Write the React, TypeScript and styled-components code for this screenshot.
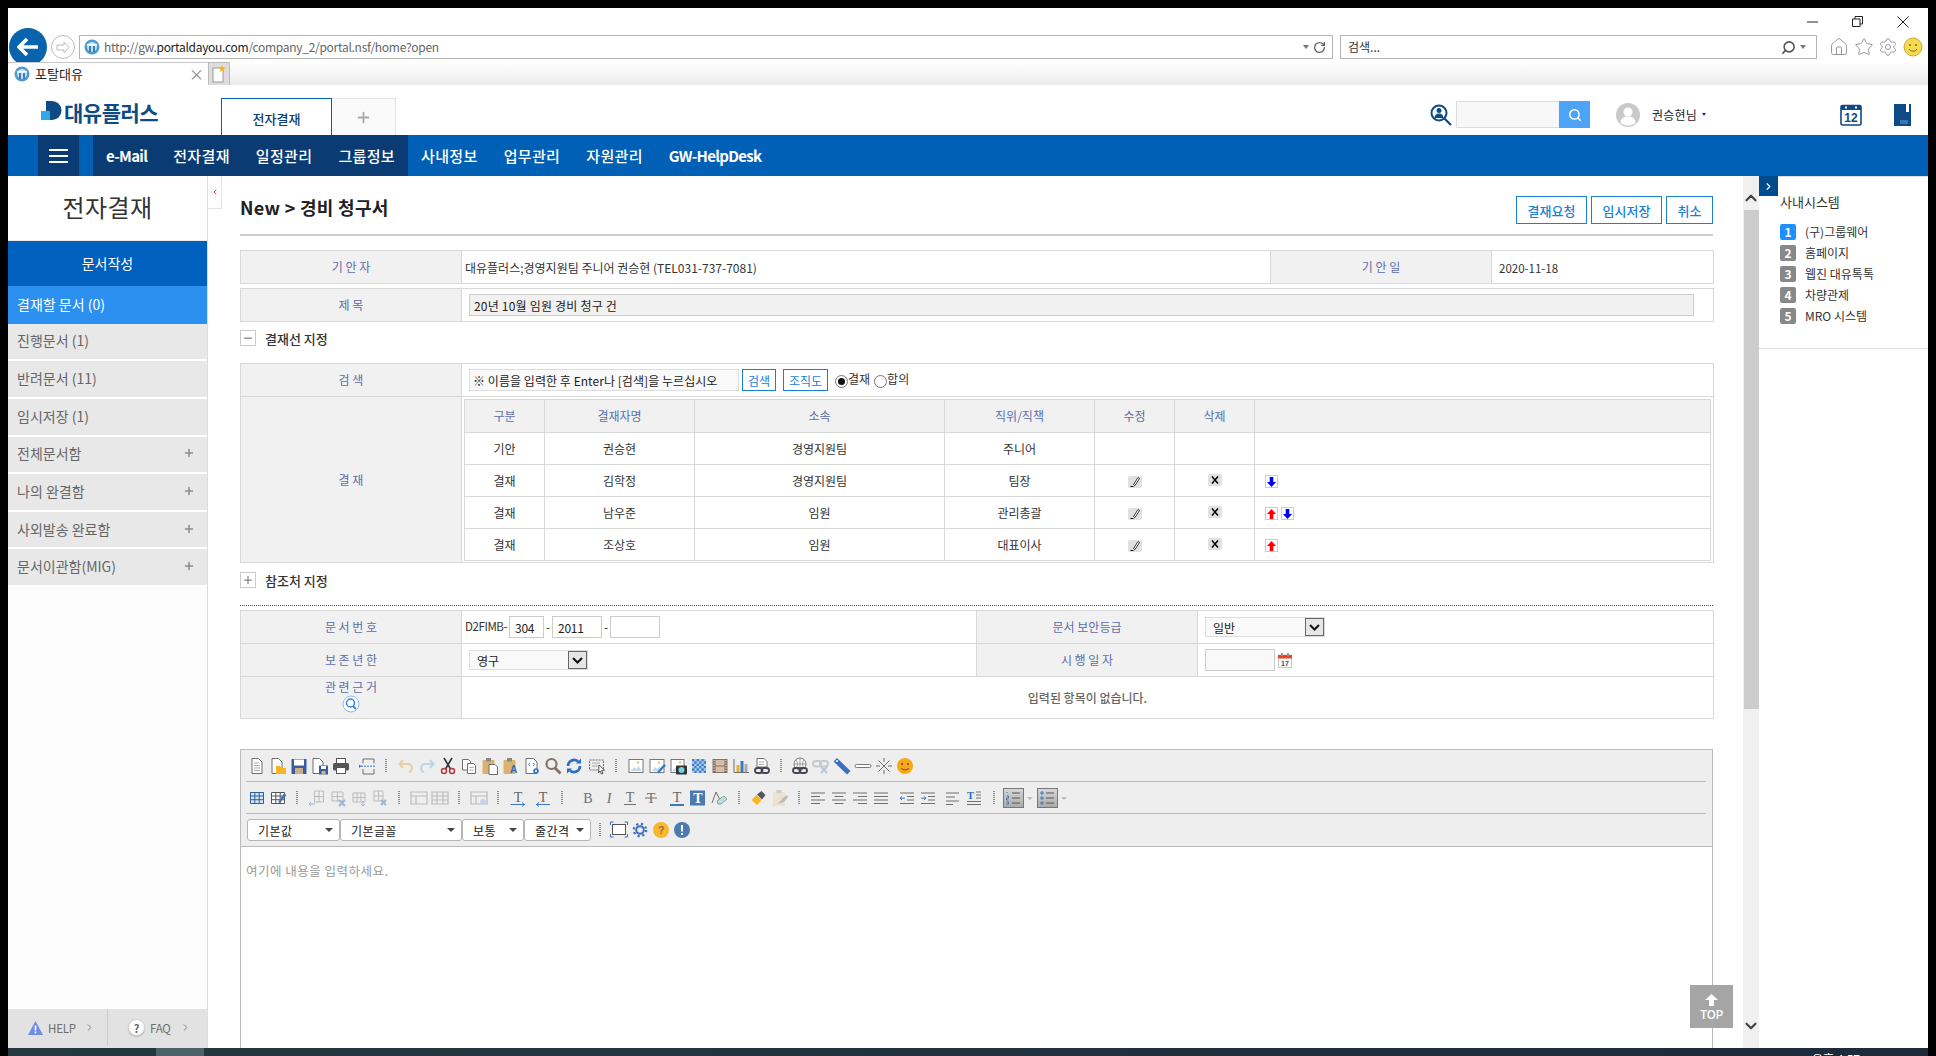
import React from 'react';
import styled, { createGlobalStyle } from 'styled-components';
import { Home, Star, Settings, RotateCw, Search, Plus, Minus, ChevronRight, ChevronLeft, ChevronUp, ChevronDown } from 'lucide-react';

const Global = createGlobalStyle`
  html, body { margin: 0; padding: 0; height: 100%; background: #000; overflow: hidden; }
  #root { height: 100%; }
  * { box-sizing: border-box; }
  body { font-family: "Noto Sans CJK KR", "Noto Sans", sans-serif; font-size: 12px; color: #333; }
  input { font-family: inherit; }
`;

const Page = styled.div`
  height: 1056px; padding: 8px 8px 0; display: flex; flex-direction: column; background: #000;
`;
const Win = styled.div`
  width: 1920px; height: 1040px; background: #fff; display: flex; flex-direction: column; overflow: hidden;
`;
const WinControls = styled.div`
  height: 27px; display: flex; align-items: center; justify-content: flex-end; padding-right: 19px; gap: 34px;
  svg { display: block; }
`;
const AddrRow = styled.div`
  height: 24px; display: flex; align-items: center; padding-left: 1px;
`;
const BackBtn = styled.div`
  width: 38px; height: 38px; border-radius: 50%; background: #0a64ad; display: flex; align-items: center; justify-content: center; flex: none;
`;
const FwdBtn = styled.div`
  width: 24px; height: 24px; margin-left: 4px; border: 1px solid #bbb; border-radius: 50%; display: flex; align-items: center; justify-content: center; flex: none;
`;
const UrlBox = styled.div<{ $w: number; $ml: number }>`
  width: ${p => p.$w}px; margin-left: ${p => p.$ml}px; height: 24px; border: 1px solid #b4b4b4; display: flex; align-items: center; padding: 0 6px 0 4px; flex: none; font-size: 12px; line-height: 22px; color: #666;
`;
const UrlText = styled.span`
  flex: 1; margin-left: 4px; letter-spacing: -0.28px; b { color: #222; font-weight: 400; }
`;
const SearchText = styled.span`
  flex: 1; margin-left: 3px; color: #333;
`;
const Tiny = styled.span`
  width: 0; height: 0; border-left: 3px solid transparent; border-right: 3px solid transparent; border-top: 4px solid #777; margin: 0 4px;
`;
const BrowserIcons = styled.div`
  display: flex; align-items: center; gap: 4.5px; margin-left: 12px; svg { display: block; }
`;
const Gap3 = styled.div` height: 3px; `;
const TabRow = styled.div`
  height: 23px; position: relative; display: flex; background: linear-gradient(#fff, #ececec); flex: none;
`;
const BTab = styled.div`
  width: 200px; height: 23px; background: #fff; border-top: 1px solid #c8c8c8; display: flex; align-items: center; padding: 0 4px 1px 6px; font-size: 13px; color: #222; gap: 5px;
`;
const BTabTitle = styled.span` flex: 1; `;
const BTabClose = styled.span` color: #888; font-size: 15px; line-height: 1; `;
const NewTab = styled.div`
  width: 22px; height: 23px; background: #ddd; border: 1px solid #bbb; border-bottom: 0; display: flex; align-items: center; justify-content: center;
`;

const Header = styled.div`
  height: 50px; display: flex; position: relative; flex: none; background: #fff;
`;
const Logo = styled.div`
  width: 213px; padding: 15px 0 0 33px; display: flex; align-items: flex-start; color: #0d4a86; font-weight: 700; font-size: 21px; line-height: 24px; letter-spacing: -0.5px; gap: 1px;
`;
const PortalTabs = styled.div`
  display: flex; align-items: flex-end; height: 50px;
`;
const PTab = styled.div`
  width: 111px; height: 37px; border: 1px solid #0060b6; border-bottom: 0; display: flex; align-items: center; justify-content: center; font-size: 13px; font-weight: 500; color: #0b3d74; padding-top: 3px;
`;
const PAdd = styled.div`
  width: 64px; height: 37px; border: 1px solid #e4e4e4; border-left: 0; border-bottom: 0; background: #fafafa; display: flex; align-items: center; justify-content: center; color: #aaa;
`;
const HeaderRight = styled.div`
  margin-left: auto; display: flex; align-items: center; height: 50px; padding-right: 17px; padding-top: 9px;
`;
const HSearchIco = styled.div` width: 22px; height: 22px; margin-right: 4px; `;
const HInput = styled.div` width: 103px; height: 27px; background: #f8f8f8; border: 1px solid #ddd; border-right: 0; `;
const HBtn = styled.div` width: 31px; height: 27px; background: #4da3f5; display: flex; align-items: center; justify-content: center; `;
const Avatar = styled.div` width: 24px; height: 24px; margin-left: 26px; `;
const UserName = styled.div` margin-left: 12px; font-size: 12px; color: #222; letter-spacing: .2px; display: flex; align-items: center; gap: 3px; `;
const Caret = styled.span` width: 0; height: 0; border-left: 2.5px solid transparent; border-right: 2.5px solid transparent; border-top: 3px solid #0b3d74; margin-left: 2px; `;
const HIco = styled.div<{ $ml: number }>` margin-left: ${p => p.$ml}px; height: 22px; svg { display: block; } `;

const Nav = styled.nav`
  height: 41px; background: #0060b6; display: flex; padding-left: 30px; flex: none;
`;
const Burger = styled.div`
  width: 41px; background: #0a3c73; display: flex; flex-direction: column; justify-content: center; align-items: center; gap: 4px;
  i { display: block; width: 19px; height: 2px; background: #fff; }
`;
const DarkGroup = styled.div`
  margin-left: 14px; background: #0a3c73; display: flex;
`;
const NavGroup = styled.div` display: flex; `;
const NavItem = styled.div<{ $latin?: boolean }>`
  padding: 0 13px; display: flex; align-items: center; color: #fff; font-size: 15px; font-weight: ${p => (p.$latin ? 700 : 500)}; letter-spacing: ${p => (p.$latin ? '-0.7px' : '0.35px')};
`;

const Body = styled.div`
  flex: 1; display: flex; min-height: 0;
`;
const Side = styled.aside`
  width: 200px; flex: none; border-right: 1px solid #ddd; background: #fcfcfc; display: flex; flex-direction: column;
`;
const SideTitle = styled.div`
  height: 65px; background: #fff; display: flex; align-items: center; justify-content: center; font-size: 24px; color: #333; letter-spacing: .4px; padding-bottom: 4px; border-bottom: 1px solid #e8e8e8;
`;
const SideWrite = styled.div`
  height: 45px; background: #0060c0; color: #fff; font-size: 14px; display: flex; align-items: center; justify-content: center; padding-bottom: 2px;
`;
const SideItem = styled.div<{ $active?: boolean }>`
  height: 37.65px; padding: 0 12px 2px 9px; display: flex; align-items: center; justify-content: space-between; font-size: 14px; color: ${p => (p.$active ? '#fff' : '#666')}; background: ${p => (p.$active ? '#2b90ef' : '#e8e8e8')}; border-bottom: ${p => (p.$active ? 0 : '2px solid #fff')};
  svg { display: block; }
`;
const SideFoot = styled.div`
  margin-top: auto; height: 39px; background: #e2e2e2; display: flex; padding-bottom: 2px;
`;
const FootCell = styled.div<{ $w: number; $pl: number; $border?: boolean }>`
  width: ${p => p.$w}px; padding-left: ${p => p.$pl}px; display: flex; align-items: center; gap: 5px; color: #6f6f6f; font-size: 11.5px; letter-spacing: -.2px; border-right: ${p => (p.$border ? '1px solid #ccc' : 0)};
  svg { display: block; flex: none; }
`;
const FootChevron = styled.span<{ $ml: number }>` margin-left: ${p => p.$ml}px; display: flex; `;
const QMark = styled.span`
  width: 17px; height: 17px; border-radius: 50%; background: #fff; border: 1px solid #d0d0d0; box-shadow: 0 1px 1px #bbb; display: flex; align-items: center; justify-content: center; font-size: 11px; font-weight: 700; color: #666; flex: none;
`;

const Main = styled.main`
  flex: 1; min-width: 0; padding: 20px 30px 0 32px; position: relative; overflow: hidden; display: flex; flex-direction: column;
`;
const FoldTab = styled.div`
  position: absolute; left: 0; top: 0; width: 14px; height: 33px; border: 1px solid #e3e3e3; border-top: 0; border-left: 0; display: flex; align-items: center; justify-content: center; background: #fff;
`;
const TitleRow = styled.div`
  height: 28px; display: flex; align-items: center; justify-content: space-between; margin-bottom: 10px; flex: none;
`;
const PageTitle = styled.h1`
  margin: 0; font-size: 18px; font-weight: 700; color: #222; letter-spacing: .3px; line-height: 24px; position: relative; top: -3px;
`;
const Actions = styled.div` display: flex; gap: 4px; `;
const ActBtn = styled.div<{ $w: number }>`
  width: ${p => p.$w}px; height: 28px; border: 1px solid #1a7fd8; color: #1a7fd8; font-size: 13px; font-weight: 500; display: flex; align-items: center; justify-content: center; background: #fff;
`;
const Rule = styled.div` height: 2px; background: #ccc; margin-bottom: 14px; flex: none; `;
const FormTable = styled.table<{ $mb?: number }>`
  width: 1473px; flex: none; border-collapse: collapse; table-layout: fixed; margin-bottom: ${p => p.$mb ?? 0}px;
`;
const Th = styled.th`
  background: #f1f1f1; border: 1px solid #d8d8d8; color: #5d6eaa; font-size: 12px; font-weight: 400; text-align: center; padding: 0; line-height: 16px;
`;
const Td = styled.td<{ $center?: boolean }>`
  border: 1px solid #d8d8d8; padding: 0 3px; font-size: 12px; color: #333; letter-spacing: 0; text-align: ${p => (p.$center ? 'center' : 'left')};
`;
const Tr = styled.tr<{ $h: number }>` height: ${p => p.$h}px; `;
const ValueText = styled.span<{ $pl?: number }>` padding-left: ${p => p.$pl ?? 0}px; font-size: 11.5px; `;
const TitleInput = styled.input`
  display: block; width: 1225px; height: 22px; margin-left: 4px; background: #f1f1f1; border: 1px solid #ccc; padding: 0 4px; font-size: 12px; letter-spacing: .2px; color: #222;
`;
const SectionRow = styled.div<{ $mt: number; $mb: number }>`
  display: flex; align-items: center; height: 16px; gap: 9px; margin: ${p => p.$mt}px 0 ${p => p.$mb}px; flex: none; font-size: 13px; font-weight: 500; color: #333; line-height: 16px;
`;
const SectionLabel = styled.span` padding-top: 2px; `;
const Toggle = styled.div`
  width: 16px; height: 16px; border: 1px solid #ccc; display: flex; align-items: center; justify-content: center; color: #888; svg { display: block; }
`;
const FieldRow = styled.div`
  display: flex; align-items: center; padding-left: 4px;
`;
const NameInput = styled.input`
  width: 270px; height: 22px; background: #f9f9f9; border: 1px solid #ddd; padding: 0 3px; font-size: 12px; color: #222; letter-spacing: .05px;
`;
const MiniBtn = styled.div<{ $w: number; $ml: number }>`
  width: ${p => p.$w}px; margin-left: ${p => p.$ml}px; height: 22px; border: 1px solid #1a7fd8; color: #1a7fd8; font-size: 12px; display: flex; align-items: center; justify-content: center;
`;
const Radio = styled.span<{ $on?: boolean; $ml: number }>`
  width: 13px; height: 13px; margin-left: ${p => p.$ml}px; border-radius: 50%; border: 1px solid #777; display: flex; align-items: center; justify-content: center; background: #fff; margin-top: 3px;
  &::after { content: ''; width: 7px; height: 7px; border-radius: 50%; background: ${p => (p.$on ? '#111' : 'transparent')}; }
`;
const RadioLabel = styled.span` font-size: 12px; color: #333; margin-bottom: 3px; `;
const InnerWrap = styled.td`
  border: 1px solid #d8d8d8; padding: 0 2px 0 2px; height: 166px;
`;
const InnerTable = styled.table`
  width: 1246px; border-collapse: collapse; table-layout: fixed;
`;
const ITh = styled.th`
  height: 33px; background: #f1f1f1; border: 1px solid #d8d8d8; color: #5d6eaa; font-size: 12px; font-weight: 400; padding: 0;
`;
const ITd = styled.td<{ $left?: boolean }>`
  height: 32px; border: 1px solid #d8d8d8; font-size: 12px; color: #333; text-align: ${p => (p.$left ? 'left' : 'center')}; padding: ${p => (p.$left ? '3px 0 0 10px' : 0)};
  svg { vertical-align: middle; }
`;
const ArrowRow = styled.div` display: flex; gap: 3px; `;
const ArrowBox = styled.div`
  width: 13px; height: 13px; border: 1px solid #ccc; display: flex; align-items: center; justify-content: center; background: #fff;
`;
const Dotted = styled.div`
  height: 1px; margin: 17px 0 4px; flex: none; background: repeating-linear-gradient(90deg, #555 0 1px, transparent 1px 2px);
`;
const DocPrefix = styled.span` font-size: 11.5px; color: #333; letter-spacing: -.4px; margin-right: 2px; margin-bottom: 2px; `;
const SmallInput = styled.input<{ $w: number }>`
  width: ${p => p.$w}px; height: 22px; border: 1px solid #ccc; background: #fff; padding: 0 5px; font-size: 12px; color: #222; letter-spacing: -.3px;
`;
const Dash = styled.span` width: 8px; text-align: center; font-size: 12px; margin-bottom: 2px; `;
const DocCellRow = styled.div` display: flex; align-items: center; `;
const FakeSelect = styled.div<{ $w: number }>`
  width: ${p => p.$w}px; height: 20px; margin-left: 4px; border: 1px solid #ddd; background: #f9f9f9; display: flex; align-items: center; justify-content: space-between; padding-left: 7px; font-size: 12px; color: #222;
`;
const SelectArrow = styled.span`
  width: 19px; height: 18px; background: #e6e6e6; border: 1px solid #666; display: flex; align-items: center; justify-content: center; svg { display: block; }
`;
const DateInput = styled.input`
  width: 70px; height: 22px; margin-left: 4px; border: 1px solid #ccc; background: #f9f9f9;
`;
const CalSmall = styled.span` margin-left: 3px; svg { display: block; } `;
const LabelStack = styled.div` display: flex; flex-direction: column; align-items: center; gap: 0; padding-bottom: 4px; `;
const Empty = styled.div` font-weight: 500; color: #666; font-size: 12px; `;

const Editor = styled.section`
  margin-top: 30px; flex: 1; display: flex; flex-direction: column; border: 1px solid #bbb; border-bottom: 0; min-height: 0;
`;
const ToolBar = styled.div`
  height: 97px; background: #eee; border-bottom: 1px solid #bbb; padding: 0 6px 0 5px; flex: none;
`;
const ToolRow = styled.div<{ $h: number; $line?: boolean; $pl?: number }>`
  height: ${p => p.$h}px; display: flex; align-items: center; padding-left: ${p => p.$pl ?? 0}px; border-bottom: ${p => (p.$line ? '1px solid #bbb' : 0)};
`;
const ToolBtn = styled.div<{ $ml?: number; $w?: number }>`
  width: ${p => p.$w ?? 21}px; margin-left: ${p => p.$ml ?? 0}px; height: 20px; display: flex; align-items: center; justify-content: center; flex: none;
  svg { display: block; }
`;
const ToolSep = styled.div<{ $w?: number }>`
  width: ${p => p.$w ?? 18}px; height: 14px; flex: none; display: flex; justify-content: center;
  &::after { content: ''; width: 2px; height: 14px; background: repeating-linear-gradient(#8a8a8a 0 1px, transparent 1px 2px); }
`;
const EdSelect = styled.div<{ $w: number }>`
  width: ${p => p.$w}px; height: 22px; background: #fff; border: 1px solid #b5b5b5; border-radius: 3px; display: flex; align-items: center; justify-content: space-between; padding: 0 6px 0 10px; font-size: 12px; color: #222; letter-spacing: .4px; flex: none;
`;
const EdCaret = styled.span` width: 0; height: 0; border-left: 4px solid transparent; border-right: 4px solid transparent; border-top: 4px solid #444; `;
const EdArea = styled.div`
  flex: 1; padding: 15px 5px; font-size: 12.5px; color: #999; letter-spacing: .5px; line-height: 18px; background: #fff;
`;
const TopBtn = styled.div`
  position: absolute; left: 1482px; top: 809px; width: 43px; height: 43px; background: #a5a5a5; color: #fff; font-size: 12px; font-weight: 500; display: flex; flex-direction: column; align-items: center; justify-content: center; line-height: 13px; letter-spacing: -.2px; svg { display: block; margin-bottom: 1px; }
`;

const ScrollBar = styled.div`
  width: 16px; flex: none; background: #f0f0f0; display: flex; flex-direction: column; align-items: center;
  svg { display: block; flex: none; }
`;
const ScrollUp = styled.div` height: 34px; display: flex; align-items: center; justify-content: center; padding-top: 9px; `;
const ScrollThumb = styled.div` width: 15px; height: 499px; background: #ccc; flex: none; `;
const ScrollDown = styled.div` margin-top: auto; height: 31px; display: flex; align-items: flex-start; justify-content: center; `;

const Right = styled.aside`
  width: 169px; flex: none; position: relative; background: #fff;
`;
const RightFold = styled.div`
  position: absolute; left: 0; top: 0; width: 19px; height: 20px; background: #004b8d; display: flex; align-items: center; justify-content: center;
`;
const RightBox = styled.div`
  height: 173px; padding: 16px 0 0 21px; border-top: 1px solid #ddd; border-bottom: 1px solid #ddd;
`;
const RightTitle = styled.div` font-size: 13px; color: #333; line-height: 18px; margin-bottom: 13px; `;
const RightItem = styled.div`
  height: 21px; display: flex; align-items: flex-start; gap: 9px; font-size: 12px; color: #333; line-height: 15px;
`;
const Badge = styled.span<{ $on?: boolean }>`
  width: 16px; height: 16px; border-radius: 2px; background: ${p => (p.$on ? '#1e90ff' : '#888')}; color: #fff; font-size: 12px; font-weight: 700; display: flex; align-items: center; justify-content: center; line-height: 16px;
`;
const Taskbar = styled.div`
  height: 8px; width: 1920px; flex: none; overflow: hidden; display: flex; background: linear-gradient(90deg, #24383f, #1c2b3a);
`;
const TaskActive = styled.div` width: 48px; margin-left: 148px; background: #4c6268; `;
const TaskClock = styled.div` margin-left: auto; margin-right: 68px; color: #fff; font-size: 12px; line-height: 14px; padding-top: 4px; `;

const Fav = () => (
  <svg width="16" height="16" viewBox="0 0 16 16"><circle cx="8" cy="8" r="7.500" fill="#4d9bd0" /><circle cx="8" cy="8" r="5" fill="#bfe0f2" /><rect x="3" y="5" width="10" height="1.600" fill="#fff" /><rect x="5.200" y="7" width="1.600" height="6" fill="#1e6aa0" /><rect x="9.200" y="7" width="1.600" height="6" fill="#1e6aa0" /></svg>
);

const g = '#6f6f6f';
const Page0 = ({ x = 4, w = 10 }: { x?: number; w?: number }) => <path d={`M${x} 1.5h${w - 3.5}l3.5 3.5v11.5h-${w}z`} fill="#fff" stroke={g} />;
const DocLines = () => <path d="M6 6h5M6 8.5h6M6 11h6M6 13.5h6" stroke="#aaa" />;
const Grid = ({ c = '#bbb', f = 'none' }: { c?: string; f?: string }) => <path d="M2.5 3.5h13v11h-13zM2.5 7h13M2.5 10.7h13M6.8 3.5v11M11.2 3.5v11" fill={f} stroke={c} />;
const Lines = ({ d }: { d: string }) => <path d={d} stroke={g} strokeWidth="1.2" fill="none" />;
const TGlyph = ({ children, fill = g, y = 13, style = 'normal', w = 400 }: { children: string; fill?: string; y?: number; style?: string; w?: number }) => (
  <text x="9" y={y} textAnchor="middle" fontFamily="Liberation Serif, serif" fontSize="14" fontStyle={style} fontWeight={w} fill={fill}>{children}</text>
);
const Chain = ({ c = '#445' }: { c?: string }) => <g fill="none" stroke={c} strokeWidth="1.8"><rect x="2" y="11" width="7.5" height="5" rx="2.5" /><rect x="8.5" y="11" width="7.5" height="5" rx="2.5" /></g>;
const Picture = ({ w = 14 }: { w?: number }) => <g><rect x="2" y="2.5" width={w} height="13" fill="#fff" stroke="#777" /><path d="M3.5 14l3.5-4 2.5 2 2-3 3 5z" fill="#c6d8ea" /><circle cx="11" cy="5.5" r="1.3" fill="#f3c27a" /></g>;

const icons: Record<string, React.ReactNode> = {
  new: <><Page0 /><DocLines /></>,
  open: <><Page0 x={3} /><path d="M7 9h4l1.5 2H17v6H7z" fill="#fbb41e" /></>,
  save: <><rect x="1.5" y="2" width="15" height="15" fill="#3c5c9c" /><rect x="4" y="2.5" width="10" height="6" fill="#fff" /><rect x="5" y="11" width="8" height="6" fill="#c9b18c" /></>,
  saveas: <><Page0 x={2} /><rect x="8" y="8.5" width="9" height="9" fill="#3c5c9c" /><rect x="10" y="9" width="5" height="3" fill="#fff" /><rect x="10.5" y="14" width="4" height="3.5" fill="#c9b18c" /></>,
  print: <><rect x="4.5" y="1.5" width="9" height="5" fill="#fff" stroke="#555" /><rect x="1" y="6" width="16" height="7.5" rx="1.5" fill="#555" /><rect x="4.5" y="10.5" width="9" height="6" fill="#fff" stroke="#555" /></>,
  pagebreak: <><path d="M5 6.5V2h11v4.5M5 12v5h11v-5" fill="none" stroke={g} /><path d="M3 9.2h14" stroke="#3a78c2" strokeDasharray="2 1" /><path d="M1 7.5v3.5l2.5-1.7z" fill="#3a78c2" /></>,
  undo: <path d="M6 3L2.5 7 6 11M3 7h8a4 4 0 0 1 4 4v1a4 4 0 0 1-3 3" fill="none" stroke="#e8cfa3" strokeWidth="2" />,
  redo: <path d="M12 3l3.5 4-3.5 4M15 7H7a4 4 0 0 0-4 4v1a4 4 0 0 0 3 3" fill="none" stroke="#bfd3e6" strokeWidth="2" />,
  cut: <><path d="M5 1l6.5 11M13 1L6.5 12" stroke="#333" strokeWidth="1.6" /><circle cx="5" cy="14" r="2.5" fill="none" stroke="#b5383c" strokeWidth="1.5" /><circle cx="13" cy="14" r="2.5" fill="none" stroke="#b5383c" strokeWidth="1.5" /></>,
  copy: <><path d="M2.5 2.5h6l2 2v8.5h-8z" fill="#fff" stroke={g} /><path d="M7.5 6.5h6l2 2v8h-8z" fill="#fff" stroke={g} /><path d="M9.5 10.5h4M9.5 13h4" stroke="#aaa" /></>,
  paste: <><rect x="1.5" y="3" width="12" height="14" rx="1" fill="#d9b26e" /><rect x="5" y="1" width="5" height="3.5" fill="#888" /><path d="M8 7.5h6l2.5 2.5v7.5H8z" fill="#fff" stroke={g} /></>,
  pastetext: <><rect x="1.5" y="3" width="12" height="14" rx="1" fill="#d9b26e" /><rect x="5" y="1" width="5" height="3.5" fill="#888" /><text x="11.5" y="15.5" textAnchor="middle" fontFamily="Liberation Sans" fontSize="10" fontWeight="700" fill="#2f6cb8">A</text></>,
  html: <><Page0 x={3} w={11} /><path d="M7 6L5.5 7.5 7 9M10 6l1.5 1.5L10 9" stroke="#3a78c2" fill="none" /><circle cx="13" cy="14" r="2.8" fill="#3a78c2" /><circle cx="13" cy="14" r="1" fill="#fff" /></>,
  find: <><circle cx="7.5" cy="7" r="5" fill="none" stroke="#8a6f64" strokeWidth="2.2" /><path d="M11 11l5.500 5.500" stroke="#8a6f64" strokeWidth="2.8" /></>,
  replace: <><path d="M3 9a6 6 0 0 1 10-4.500" fill="none" stroke="#2b6cc4" strokeWidth="2.6" /><path d="M15 9a6 6 0 0 1-10 4.500" fill="none" stroke="#2b6cc4" strokeWidth="2.6" /><path d="M11 6.500h5V1.500zM7 11.500H2v5z" fill="#2b6cc4" /></>,
  select: <><rect x="1.5" y="3" width="14" height="10" fill="none" stroke={g} strokeDasharray="2 1" /><path d="M4 6h8M4 9h6" stroke="#aaa" /><path d="M11 8l5.500 5-3 .5 1.500 3-1.500.5-1.500-3-1.500 2z" fill="#fff" stroke="#555" /></>,
  image: <Picture />,
  imageedit: <><Picture /><path d="M9 15l7-8 2 1.500-7.500 8z" fill="#3a78c2" /></>,
  camera: <><Picture w={13} /><rect x="7" y="8.5" width="11" height="9" rx="1" fill="#333" /><circle cx="12.5" cy="13" r="3" fill="#6fd3f0" /></>,
  pattern: <><rect x="2" y="2" width="14" height="14" fill="#3f7fc8" /><path d="M4.300 2h2.300v2.300H4.300zM9 2h2.300v2.300H9zM13.700 2H16v2.300h-2.300zM2 4.300h2.300v2.400H2zM6.600 4.300H9v2.400H6.600zM11.300 4.300h2.400v2.400h-2.400zM4.300 6.700h2.300V9H4.300zM9 6.700h2.300V9H9zM13.700 6.700H16V9h-2.300zM2 9h2.300v2.300H2zM6.600 9H9v2.300H6.600zM11.300 9h2.400v2.300h-2.400zM4.300 11.300h2.300v2.400H4.300zM9 11.300h2.300v2.400H9zM13.700 11.300H16v2.400h-2.300zM2 13.700h2.300V16H2zM6.600 13.700H9V16H6.600zM11.300 13.700h2.400V16h-2.400z" fill="#a9cdf0" /></>,
  film: <><rect x="1.5" y="2" width="15" height="14" fill="#8a6f64" /><rect x="4.5" y="3" width="9" height="5.500" fill="#d6bfa6" /><rect x="4.5" y="9.500" width="9" height="5.500" fill="#d6bfa6" /><path d="M2.500 3.500h1M2.500 6h1M2.500 8.500h1M2.500 11h1M2.500 13.500h1M14.500 3.500h1M14.500 6h1M14.500 8.500h1M14.500 11h1M14.500 13.500h1" stroke="#eee" /></>,
  chart: <><path d="M2 2v13.500h15" fill="none" stroke={g} /><rect x="4.500" y="8" width="3" height="7" fill="#f3ab1f" /><rect x="8.500" y="4" width="3" height="11" fill="#3a78c2" /><rect x="12.500" y="7" width="3" height="8" fill="#aaa" /></>,
  doclink: <><path d="M4 1.500h7l3 3V10H4z" fill="#fff" stroke={g} /><path d="M6 5h5M6 7.500h5" stroke="#aaa" /><Chain /></>,
  link: <><circle cx="9" cy="7" r="6" fill="#fff" stroke="#777" /><path d="M3 7h12M9 1v12M5 3c2 2 2 6 0 8M13 3c-2 2-2 6 0 8" stroke="#999" fill="none" /><Chain /></>,
  unlink: <><g fill="none" stroke="#c3c8cc" strokeWidth="1.8"><rect x="1" y="4" width="8" height="5.500" rx="2.700" /><rect x="8" y="4" width="8" height="5.500" rx="2.700" /></g><path d="M9 10l6 6M15 10l-6 6" stroke="#b8c8e0" strokeWidth="2" /></>,
  tag: <><path d="M1.500 3.500L4 1l13.500 13-3.500 3.500L1 5z" fill="#3a6fc4" /><circle cx="4" cy="4" r="1" fill="#fff" /></>,
  hr: <rect x="1" y="7.500" width="16" height="3" rx="1.500" fill="#fff" stroke="#777" />,
  special: <path d="M9 1v4M9 13v4M1 9h4M13 9h4M3.500 3.500l11 11M14.500 3.500l-11 11" stroke={g} strokeWidth="1" />,
  smile: <><circle cx="9" cy="9" r="8" fill="#f9a81a" /><circle cx="6" cy="7" r="1" fill="#6b4a10" /><circle cx="12" cy="7" r="1" fill="#6b4a10" /><path d="M5 11c2 2.500 6 2.500 8 0" fill="none" stroke="#6b4a10" /></>,
  table: <><rect x="2" y="3" width="14" height="3" fill="#555" /><path d="M2.500 3.500h13v11h-13zM2.500 7h13M2.500 10.700h13M6.800 3.500v11M11.200 3.500v11" fill="#cfe4fa" stroke="#34628f" /></>,
  tableedit: <><Grid c="#555" f="#fff" /><path d="M9 13l6-8.500 2.500 1.500-6.500 8z" fill="#3a78c2" /></>,
  rowadd: <><path d="M6.500 2h9v11h-9zM6.500 7.500h9M11 2v11" fill="none" stroke="#bbb" /><path d="M1 15h6M1 15l2-2M1 15l2 2" stroke="#9db6d6" fill="none" /></>,
  rowdel: <><path d="M3 2h9v10H3zM3 7h9M7.500 2v10" fill="none" stroke="#bbb" /><path d="M10 11l5 5M15 11l-5 5" stroke="#9db6d6" strokeWidth="2" /></>,
  coladd: <><path d="M3 4h12v9H3zM3 8.500h12M7 4v9M11 4v9" fill="none" stroke="#bbb" /><path d="M13 12v5M13 17l-2-2M13 17l2-2" stroke="#9db6d6" fill="none" /></>,
  coldel: <><path d="M3 3h11v9H3zM3 7.500h11M8.500 3v9" fill="none" stroke="#bbb" /><path d="M10 11l6 6M16 11l-6 6" stroke="#9db6d6" strokeWidth="2" /></>,
  merge: <path d="M1 3h16v12H1zM1 7h16M6 7v8" fill="none" stroke="#bbb" strokeWidth="1.2" />,
  split: <path d="M1 3h16v12H1zM1 7h16M1 11h16M6 3v12M12 3v12" fill="none" stroke="#bbb" strokeWidth="1.2" />,
  cellprop: <><path d="M1 3h16v12H1zM1 7h16M6 7v8" fill="none" stroke="#bbb" strokeWidth="1.2" /><circle cx="13" cy="13" r="3" fill="#c5d5e8" /></>,
  tltr: <><TGlyph fill="#666" y={13}>T</TGlyph><path d="M1.500 15.500h14M13 13.500l2.500 2-2.500 2" stroke="#3a78c2" fill="none" /></>,
  trtl: <><TGlyph fill="#666" y={13}>T</TGlyph><path d="M2 15.500h14M5 13.500l-2.500 2 2.500 2" stroke="#3a78c2" fill="none" /></>,
  bold: <TGlyph y={14}>B</TGlyph>,
  italic: <TGlyph y={14} style="italic">I</TGlyph>,
  under: <><TGlyph y={13}>T</TGlyph><path d="M3 15.500h12" stroke={g} /></>,
  strike: <><TGlyph y={14}>T</TGlyph><path d="M3 9h12" stroke={g} /></>,
  tcolor: <><TGlyph y={13} fill="#666">T</TGlyph><rect x="2" y="15" width="14" height="2" fill="#3a78c2" /></>,
  bcolor: <><rect x="1" y="1.500" width="15" height="15" fill="#4a78b0" /><TGlyph y={14} fill="#fff" w={700}>T</TGlyph></>,
  eraser: <><path d="M2 14L6 3l4 8" fill="none" stroke={g} /><path d="M7 12l7-5 3 3-6 5H8z" fill="#c5dce8" stroke="#7a9" /></>,
  brush: <><path d="M1.500 11l5-5 5 5-4.500 5z" fill="#f9b51e" /><path d="M7 5.500L11.500 2l4 4L12 10.500z" fill="#555" /></>,
  pastefmt: <><rect x="2" y="3" width="12" height="14" fill="#efe2cc" /><rect x="5.500" y="1" width="5" height="3" fill="#ccc" /><path d="M7 15l4-5 5-4 1 2-4 5z" fill="#bbb" /></>,
  alignl: <Lines d="M2 4h14M2 7.500h9M2 11h14M2 14.500h9" />,
  alignc: <Lines d="M2 4h14M4.500 7.500h9M2 11h14M4.500 14.500h9" />,
  alignr: <Lines d="M2 4h14M7 7.500h9M2 11h14M7 14.500h9" />,
  alignj: <Lines d="M2 4h14M2 7.500h14M2 11h14M2 14.500h14" />,
  outdent: <><Lines d="M2 4h14M9 7.500h7M9 11h7M2 14.500h14" /><path d="M7 9.200H2M2 9.200l2-1.700M2 9.200l2 1.700" stroke="#3a78c2" fill="none" /></>,
  indent: <><Lines d="M2 4h14M9 7.500h7M9 11h7M2 14.500h14" /><path d="M2 9.200h5M7 9.200L5 7.500M7 9.200l-2 1.700" stroke="#3a78c2" fill="none" /></>,
  linel: <Lines d="M2 4h13M2 8h9M2 12h13M2 15.500h7" />,
  lineh: <><text x="5.500" y="10" textAnchor="middle" fontFamily="Liberation Serif" fontSize="10.500" fontWeight="700" fill="#2b6cc4">T</text><Lines d="M11 3h5M11 6h5M11 9h5M2 12.500h14M2 15.500h14" /></>,
  fullscreen: <><rect x="2.500" y="3.500" width="13" height="10" fill="#fff" stroke="#555" /><path d="M.5 4V1h3M14.500 1h3v3M.5 13v3h3M14.500 16h3v-3" fill="none" stroke="#3a6fc4" /></>,
  gear: <><circle cx="9" cy="9" r="3.800" fill="none" stroke="#3a6fc4" strokeWidth="2" /><circle cx="9" cy="9" r="6.200" fill="none" stroke="#3a6fc4" strokeWidth="2.200" strokeDasharray="2.200 2.700" /></>,
  help: <><circle cx="9" cy="9" r="8" fill="#fbb72c" /><text x="9" y="13" textAnchor="middle" fontFamily="Liberation Sans" fontSize="11" fontWeight="700" fill="#8a7656">?</text></>,
  info: <><circle cx="9" cy="9" r="8" fill="#4a7bb2" /><rect x="8" y="4" width="2" height="6.500" fill="#fff" /><rect x="8" y="12" width="2" height="2" fill="#fff" /></>,
};

const TI = ({ n, ml }: { n: string; ml?: number }) => (
  <ToolBtn $ml={ml}><svg width="18" height="18" viewBox="0 0 18 18">{icons[n]}</svg></ToolBtn>
);
const tokens = (s: string) =>
  s.split(' ').map((t, i) => {
    if (t[0] === '|') return <ToolSep key={i} $w={t.length > 1 ? Number(t.slice(1)) : undefined} />;
    const [n, m] = t.split(':');
    return <TI key={i} n={n} ml={m ? Number(m) : undefined} />;
  });

const ListBtn = ({ ordered }: { ordered?: boolean }) => (
  <ToolBtn $w={34}>
    <svg width="34" height="20" viewBox="0 0 34 20">
      <defs><linearGradient id={ordered ? 'lg1' : 'lg2'} x1="0" y1="0" x2="0" y2="1"><stop offset="0" stopColor="#d8d8d8" /><stop offset="1" stopColor="#aaa" /></linearGradient></defs>
      <rect x=".5" y=".5" width="20" height="19" fill={`url(#${ordered ? 'lg1' : 'lg2'})`} stroke="#777" />
      {ordered
        ? <path d="M4 4v1M3.500 8h2v2h-2v2h2M3.500 14h2v2h-2" stroke="#3a78c2" fill="none" />
        : <path d="M3 5h4M5 3v4M3 10h4M5 8v4M3 15h4M5 13v4" stroke="#3a78c2" fill="none" />}
      <path d="M9 5h8M9 10h8M9 15h8" stroke="#555" strokeWidth="1.2" />
      <path d="M24 9h6l-3 3z" fill="#bbb" />
    </svg>
  </ToolBtn>
);

const Pen = () => (
  <svg width="14" height="12" viewBox="0 0 14 12"><rect width="14" height="12" rx="2" fill="#e0e0e0" /><path d="M5.500 8.500L10 1.500l1.500 1L7 9.500z" fill="#fff" stroke="#111" strokeWidth=".8" /><path d="M2.500 10.500h3" stroke="#111" /></svg>
);
const Del = () => (
  <svg width="14" height="12" viewBox="0 0 14 12" style={{ position: 'relative', top: -2 }}><rect width="14" height="12" rx="2" fill="#e0e0e0" /><path d="M4 2.500l6 7M10 2.500l-6 7" stroke="#000" strokeWidth="1.5" /></svg>
);
const Arrow = ({ up }: { up?: boolean }) => (
  <ArrowBox>
    <svg width="9" height="10" viewBox="0 0 9 10">
      {up ? <path d="M4.500 0L9 5H6.300v5H2.700V5H0z" fill="#f00" /> : <path d="M4.500 10L9 5H6.300V0H2.700v5H0z" fill="#00f" />}
    </svg>
  </ArrowBox>
);
const Chevron = () => <svg width="11" height="7" viewBox="0 0 11 7"><path d="M1 1l4.500 4.500L10 1" fill="none" stroke="#111" strokeWidth="2" /></svg>;

const rows: [string, string, string, string, boolean, boolean, boolean, boolean][] = [
  ['기안', '권승현', '경영지원팀', '주니어', false, false, false, false],
  ['결재', '김학정', '경영지원팀', '팀장', true, true, false, true],
  ['결재', '남우준', '임원', '관리총괄', true, true, true, true],
  ['결재', '조상호', '임원', '대표이사', true, true, true, false],
];
const sideItems: [string, boolean][] = [
  ['진행문서 (1)', false], ['반려문서 (11)', false], ['임시저장 (1)', false],
  ['전체문서함', true], ['나의 완결함', true], ['사외발송 완료함', true], ['문서이관함(MIG)', true],
];
const navA = ['전자결재', '일정관리', '그룹정보'];
const navB = ['사내정보', '업무관리', '자원관리'];
const sys = ['(구)그룹웨어', '홈페이지', '웹진 대유톡톡', '차량관제', 'MRO 시스템'];

export default function App() {
  return (
    <Page>
      <Global />
      <Win>
        <WinControls>
          <svg width="11" height="2" viewBox="0 0 11 2"><path d="M0 1h11" stroke="#222" /></svg>
          <svg width="11" height="11" viewBox="0 0 11 11"><path d="M.5 3h7.500v7.500H.5zM3 3V.5h7.500V8H8" fill="none" stroke="#222" /></svg>
          <svg width="12" height="12" viewBox="0 0 12 12"><path d="M.5.5l11 11M11.500.5l-11 11" stroke="#222" /></svg>
        </WinControls>
        <AddrRow>
          <BackBtn>
            <svg width="22" height="20" viewBox="0 0 22 20"><path d="M10 2l-8 8 8 8M3 10h18" fill="none" stroke="#fff" strokeWidth="3.5" /></svg>
          </BackBtn>
          <FwdBtn>
            <svg width="14" height="13" viewBox="0 0 14 13"><path d="M8 1l5 5.500L8 12V9H1V4h7z" fill="none" stroke="#bbb" /></svg>
          </FwdBtn>
          <UrlBox $w={1254} $ml={4}>
            <Fav />
            <UrlText>http://gw.<b>portaldayou.com</b>/company_2/portal.nsf/home?open</UrlText>
            <Tiny />
            <RotateCw size={13} color="#666" strokeWidth={2.5} />
          </UrlBox>
          <UrlBox $w={477} $ml={7}>
            <SearchText>검색...</SearchText>
            <Search size={15} color="#555" strokeWidth={2.5} style={{ transform: 'scaleX(-1)' }} />
            <Tiny />
          </UrlBox>
          <BrowserIcons>
            <Home size={20} color="#999" strokeWidth={1.2} />
            <Star size={20} color="#999" strokeWidth={1.2} />
            <Settings size={20} color="#999" strokeWidth={1.2} />
            <svg width="20" height="20" viewBox="0 0 20 20"><circle cx="10" cy="10" r="9" fill="#f5d94f" stroke="#c9a93a" /><circle cx="7" cy="8" r="1" fill="#7a6a20" /><circle cx="13" cy="8" r="1" fill="#7a6a20" /><path d="M6 12c2 3 6 3 8 0" fill="none" stroke="#7a6a20" /></svg>
          </BrowserIcons>
        </AddrRow>
        <Gap3 />
        <TabRow>
          <BTab><Fav /><BTabTitle>포탈대유</BTabTitle><BTabClose>×</BTabClose></BTab>
          <NewTab>
            <svg width="16" height="18" viewBox="0 0 16 18"><rect x="2" y="3" width="10" height="14" fill="#fff" stroke="#999" /><path d="M11 0l1 2.500 2.500.5-2 1.500.5 2.500-2-1.500-2 1.500.5-2.500-2-1.500L10 2.500z" fill="#f9b51e" /></svg>
          </NewTab>
        </TabRow>
        <Header>
          <Logo>
            <svg width="22" height="22" viewBox="0 0 22 22" style={{ marginTop: 1 }}><path d="M5 0h6a9.500 9.500 0 0 1 0 19H5z" fill="#0d4a86" /><rect x="0" y="10" width="9" height="9" fill="#2fa8e8" /></svg>
            대유플러스
          </Logo>
          <PortalTabs>
            <PTab>전자결재</PTab>
            <PAdd><Plus size={17} strokeWidth={2.5} /></PAdd>
          </PortalTabs>
          <HeaderRight>
            <HSearchIco>
              <svg width="22" height="22" viewBox="0 0 22 22"><circle cx="9" cy="9" r="7.500" fill="#fff" stroke="#0d4a86" strokeWidth="2" /><circle cx="9" cy="6.500" r="2.500" fill="#0d4a86" /><path d="M4.500 14c0-3 2-4.500 4.500-4.500s4.500 1.500 4.500 4.500z" fill="#0d4a86" /><path d="M14.500 14.500L21 21" stroke="#0d4a86" strokeWidth="2.2" /></svg>
            </HSearchIco>
            <HInput />
            <HBtn><Search size={14} color="#fff" strokeWidth={2.5} /></HBtn>
            <Avatar>
              <svg width="24" height="24" viewBox="0 0 24 24"><circle cx="12" cy="12" r="12" fill="#c9c9c9" /><circle cx="12" cy="9" r="4.500" fill="#fff" /><path d="M4.500 20c0-5 3.500-6.500 7.500-6.500s7.500 1.500 7.500 6.500a12 12 0 0 1-15 0z" fill="#fff" /></svg>
            </Avatar>
            <UserName>권승현님<Caret /></UserName>
            <HIco $ml={134}>
              <svg width="22" height="22" viewBox="0 0 22 22"><rect x="1" y="1.500" width="20" height="19.500" rx="1.500" fill="#fff" stroke="#0d4a86" strokeWidth="1.6" /><rect x="1" y="1" width="20" height="5" fill="#0d4a86" /><rect x="5" y="2.500" width="2" height="2" fill="#fff" /><rect x="15" y="2.500" width="2" height="2" fill="#fff" /><text x="11" y="18" textAnchor="middle" fontFamily="Liberation Sans" fontSize="12" fontWeight="700" fill="#0d4a86">12</text></svg>
            </HIco>
            <HIco $ml={32}>
              <svg width="17" height="22" viewBox="0 0 17 22"><path d="M0 0h17v22H0z" fill="#0d4a86" /><rect x="12" y="0" width="3" height="8" fill="#fff" /><path d="M6 17h8M6 19h8" stroke="#6fa0d0" /></svg>
            </HIco>
          </HeaderRight>
        </Header>
        <Nav>
          <Burger><i /><i /><i /></Burger>
          <DarkGroup>
            <NavItem $latin>e-Mail</NavItem>
            {navA.map(t => <NavItem key={t}>{t}</NavItem>)}
          </DarkGroup>
          <NavGroup>
            {navB.map(t => <NavItem key={t}>{t}</NavItem>)}
            <NavItem $latin>GW-HelpDesk</NavItem>
          </NavGroup>
        </Nav>
        <Body>
          <Side>
            <SideTitle>전자결재</SideTitle>
            <SideWrite>문서작성</SideWrite>
            <SideItem $active>결재할 문서 (0)</SideItem>
            {sideItems.map(([t, plus]) => (
              <SideItem key={t}>{t}{plus && <Plus size={12} color="#8a8a8a" strokeWidth={3} />}</SideItem>
            ))}
            <SideFoot>
              <FootCell $w={100} $pl={20} $border>
                <svg width="15" height="14" viewBox="0 0 15 14"><path d="M7.500 0L15 14H0z" fill="#6f8de8" /><rect x="6.700" y="4.500" width="1.600" height="5" fill="#fff" /><rect x="6.700" y="10.500" width="1.600" height="1.800" fill="#fff" /></svg>
                HELP
                <FootChevron $ml={3}><ChevronRight size={11} color="#777" strokeWidth={2} /></FootChevron>
              </FootCell>
              <FootCell $w={99} $pl={20}>
                <QMark>?</QMark>
                FAQ
                <FootChevron $ml={4}><ChevronRight size={11} color="#777" strokeWidth={2} /></FootChevron>
              </FootCell>
            </SideFoot>
          </Side>
          <Main>
            <FoldTab><ChevronLeft size={8} color="#d33" strokeWidth={2.5} /></FoldTab>
            <TitleRow>
              <PageTitle>New &gt; 경비 청구서</PageTitle>
              <Actions>
                <ActBtn $w={71}>결재요청</ActBtn>
                <ActBtn $w={71}>임시저장</ActBtn>
                <ActBtn $w={47}>취소</ActBtn>
              </Actions>
            </TitleRow>
            <Rule />
            <FormTable $mb={4}>
              <colgroup><col width={221} /><col width={809} /><col width={221} /><col width={222} /></colgroup>
              <tbody>
                <Tr $h={33}>
                  <Th>기 안 자</Th>
                  <Td>대유플러스;경영지원팀 주니어 권승현 (TEL031-737-7081)</Td>
                  <Th>기 안 일</Th>
                  <Td><ValueText $pl={4}>2020-11-18</ValueText></Td>
                </Tr>
              </tbody>
            </FormTable>
            <FormTable>
              <colgroup><col width={221} /><col width={1252} /></colgroup>
              <tbody>
                <Tr $h={33}>
                  <Th>제 목</Th>
                  <Td><TitleInput readOnly defaultValue="20년 10월 임원 경비 청구 건" /></Td>
                </Tr>
              </tbody>
            </FormTable>
            <SectionRow $mt={8} $mb={17}>
              <Toggle><Minus size={12} strokeWidth={2.5} /></Toggle>
              <SectionLabel>결재선 지정</SectionLabel>
            </SectionRow>
            <FormTable>
              <colgroup><col width={221} /><col width={1252} /></colgroup>
              <tbody>
                <Tr $h={33}>
                  <Th>검 색</Th>
                  <Td>
                    <FieldRow>
                      <NameInput readOnly defaultValue="※ 이름을 입력한 후 Enter나 [검색]을 누르십시오" />
                      <MiniBtn $w={34} $ml={3}>검색</MiniBtn>
                      <MiniBtn $w={45} $ml={7}>조직도</MiniBtn>
                      <Radio $on $ml={7} />
                      <RadioLabel>결재</RadioLabel>
                      <Radio $ml={4} />
                      <RadioLabel>합의</RadioLabel>
                    </FieldRow>
                  </Td>
                </Tr>
                <tr>
                  <Th>결 재</Th>
                  <InnerWrap>
                    <InnerTable>
                      <colgroup><col width={80} /><col width={150} /><col width={250} /><col width={150} /><col width={80} /><col width={80} /><col width={456} /></colgroup>
                      <thead>
                        <tr><ITh>구분</ITh><ITh>결재자명</ITh><ITh>소속</ITh><ITh>직위/직책</ITh><ITh>수정</ITh><ITh>삭제</ITh><ITh /></tr>
                      </thead>
                      <tbody>
                        {rows.map(([a, b, c, d, e, x, up, down]) => (
                          <tr key={b}>
                            <ITd>{a}</ITd><ITd>{b}</ITd><ITd>{c}</ITd><ITd>{d}</ITd>
                            <ITd>{e && <Pen />}</ITd>
                            <ITd>{x && <Del />}</ITd>
                            <ITd $left>
                              <ArrowRow>
                                {up && <Arrow up />}
                                {down && <Arrow />}
                              </ArrowRow>
                            </ITd>
                          </tr>
                        ))}
                      </tbody>
                    </InnerTable>
                  </InnerWrap>
                </tr>
              </tbody>
            </FormTable>
            <SectionRow $mt={9} $mb={0}>
              <Toggle><Plus size={12} strokeWidth={2.5} /></Toggle>
              <SectionLabel>참조처 지정</SectionLabel>
            </SectionRow>
            <Dotted />
            <FormTable>
              <colgroup><col width={221} /><col width={515} /><col width={221} /><col width={516} /></colgroup>
              <tbody>
                <Tr $h={33}>
                  <Th>문 서 번 호</Th>
                  <Td>
                    <DocCellRow>
                      <DocPrefix>D2FIMB-</DocPrefix>
                      <SmallInput $w={35} readOnly defaultValue="304" />
                      <Dash>-</Dash>
                      <SmallInput $w={50} readOnly defaultValue="2011" />
                      <Dash>-</Dash>
                      <SmallInput $w={50} readOnly defaultValue="" />
                    </DocCellRow>
                  </Td>
                  <Th>문서 보안등급</Th>
                  <Td><FakeSelect $w={120}>일반<SelectArrow><Chevron /></SelectArrow></FakeSelect></Td>
                </Tr>
                <Tr $h={33}>
                  <Th>보 존 년 한</Th>
                  <Td><FakeSelect $w={119}>영구<SelectArrow><Chevron /></SelectArrow></FakeSelect></Td>
                  <Th>시 행 일 자</Th>
                  <Td>
                    <DocCellRow>
                      <DateInput readOnly />
                      <CalSmall>
                        <svg width="14" height="15" viewBox="0 0 14 15"><rect x=".5" y="2" width="13" height="12.500" fill="#fff" stroke="#c8c8c8" /><rect x="0" y="2" width="14" height="3.500" fill="#e8452c" /><text x="7" y="12.500" textAnchor="middle" fontFamily="Liberation Sans" fontSize="7" fontWeight="700" fill="#445">17</text><rect x="3" y="0" width="2" height="3" fill="#999" /><rect x="9" y="0" width="2" height="3" fill="#999" /></svg>
                      </CalSmall>
                    </DocCellRow>
                  </Td>
                </Tr>
                <Tr $h={42}>
                  <Th>
                    <LabelStack>
                      관 련 근 거
                      <svg width="18" height="18" viewBox="0 0 18 18"><circle cx="9" cy="9" r="8" fill="#fff" stroke="#8fb8f0" /><circle cx="8.500" cy="8" r="4" fill="#fff" stroke="#3a80d8" strokeWidth="1.5" /><path d="M11 11l3 3" stroke="#3a80d8" strokeWidth="1.8" /></svg>
                    </LabelStack>
                  </Th>
                  <Td colSpan={3} $center><Empty>입력된 항목이 없습니다.</Empty></Td>
                </Tr>
              </tbody>
            </FormTable>
            <Editor>
              <ToolBar>
                <ToolRow $h={32} $line>
                  {tokens('new open save saveas print pagebreak:5 |18 undo redo cut copy paste pastetext html find replace select:2 |17 image:1 imageedit camera pattern film chart doclink |17 link unlink tag hr special smile')}
                </ToolRow>
                <ToolRow $h={32} $line>
                  {tokens('table tableedit |18 rowadd coldel coladd rowdel |18 merge split |18 cellprop |18 tltr trtl:4 |18 bold:6 italic under strike tcolor:5 bcolor eraser |19 brush pastefmt |17 alignl alignc alignr alignj outdent:5 indent linel:4 lineh |19')}
                  <ListBtn ordered />
                  <ListBtn />
                </ToolRow>
                <ToolRow $h={32} $pl={1}>
                  <EdSelect $w={93}>기본값<EdCaret /></EdSelect>
                  <EdSelect $w={122}>기본글꼴<EdCaret /></EdSelect>
                  <EdSelect $w={62}>보통<EdCaret /></EdSelect>
                  <EdSelect $w={67}>줄간격<EdCaret /></EdSelect>
                  <ToolSep $w={17} />
                  <TI n="fullscreen" />
                  <TI n="gear" />
                  <TI n="help" />
                  <TI n="info" />
                </ToolRow>
              </ToolBar>
              <EdArea>여기에 내용을 입력하세요.</EdArea>
            </Editor>
            <TopBtn>
              <svg width="13" height="12" viewBox="0 0 13 12"><path d="M6.500 0L13 6H9v6H4V6H0z" fill="#fff" /></svg>
              TOP
            </TopBtn>
          </Main>
          <ScrollBar>
            <ScrollUp><ChevronUp size={18} color="#444" strokeWidth={3} /></ScrollUp>
            <ScrollThumb />
            <ScrollDown><ChevronDown size={18} color="#444" strokeWidth={3} /></ScrollDown>
          </ScrollBar>
          <Right>
            <RightBox>
              <RightTitle>사내시스템</RightTitle>
              {sys.map((t, i) => (
                <RightItem key={t}><Badge $on={i === 0}>{i + 1}</Badge>{t}</RightItem>
              ))}
            </RightBox>
            <RightFold><ChevronRight size={11} color="#fff" strokeWidth={2.5} /></RightFold>
          </Right>
        </Body>
      </Win>
      <Taskbar>
        <TaskActive />
        <TaskClock>오후 4:57</TaskClock>
      </Taskbar>
    </Page>
  );
}
